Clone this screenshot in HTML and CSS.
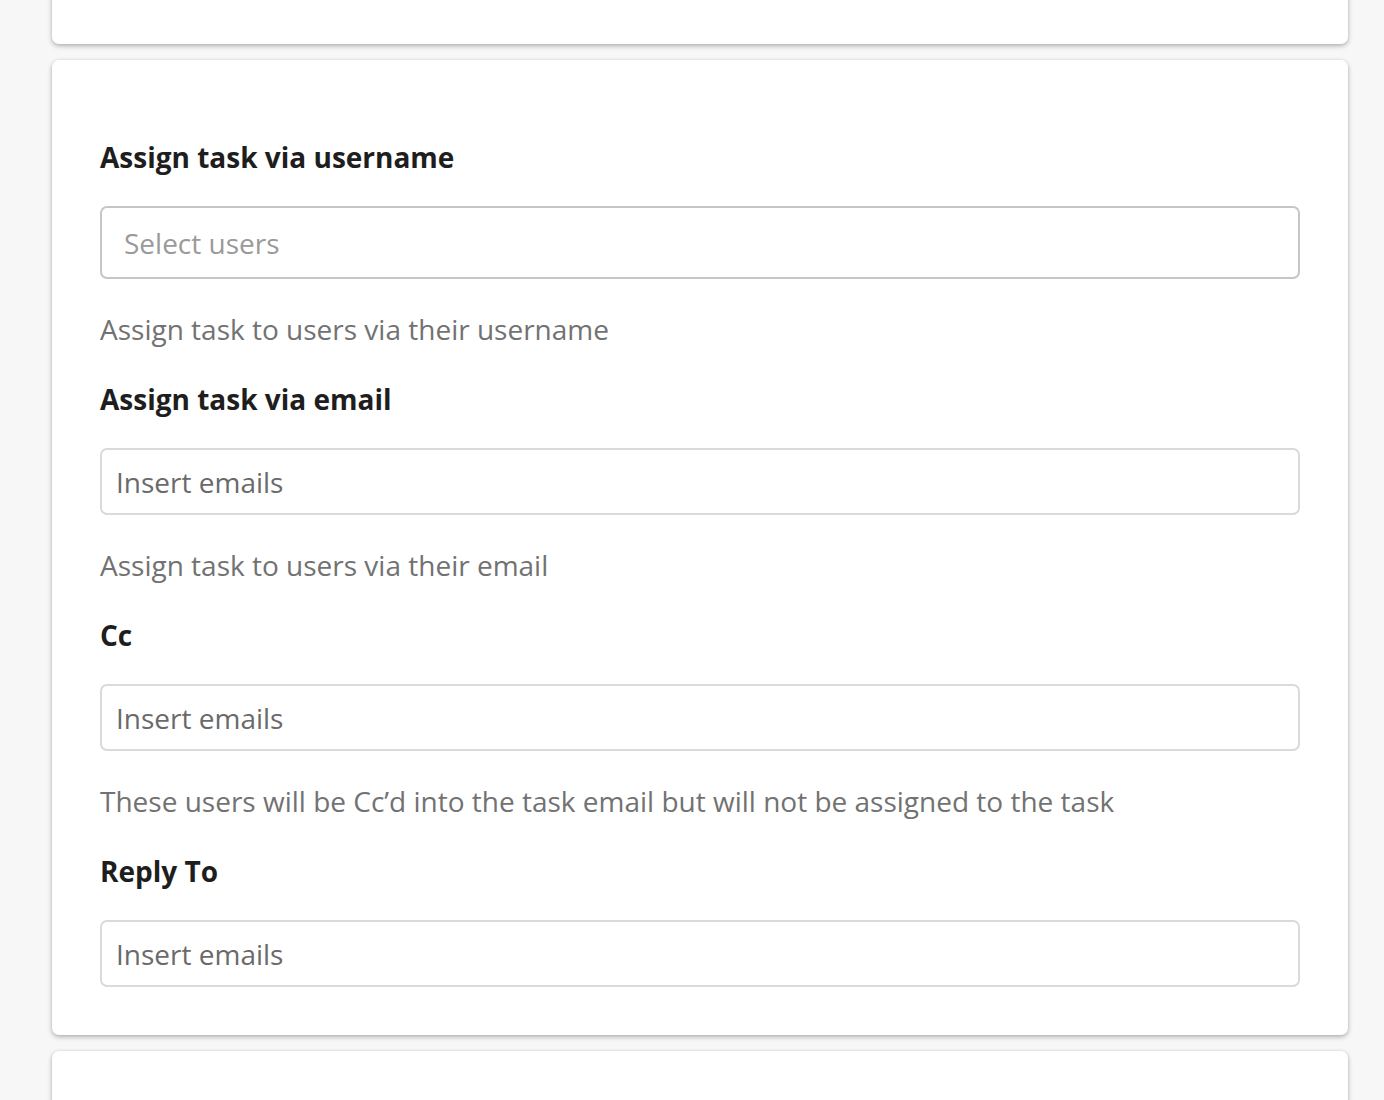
FILE: index.html
```html
<!DOCTYPE html>
<html lang="en">
<head>
<meta charset="utf-8">
<title>Assign task</title>
<link rel="stylesheet" href="styles.css">
</head>
<body>
<main class="page">
  <section class="card card-prev"></section>
  <section class="card card-main">
    <div class="field">
      <label class="label">Assign task via username</label>
      <div class="select">Select users</div>
      <p class="help">Assign task to users via their username</p>
    </div>
    <div class="field">
      <label class="label">Assign task via email</label>
      <div class="input">Insert emails</div>
      <p class="help">Assign task to users via their email</p>
    </div>
    <div class="field">
      <label class="label">Cc</label>
      <div class="input">Insert emails</div>
      <p class="help">These users will be Cc’d into the task email but will not be assigned to the task</p>
    </div>
    <div class="field">
      <label class="label">Reply To</label>
      <div class="input">Insert emails</div>
    </div>
  </section>
  <section class="card card-next"></section>
</main>
</body>
</html>
```

FILE: styles.css
```css
* { box-sizing: border-box; }
html, body { margin: 0; padding: 0; }
body {
  background: #f7f7f7;
  font-family: "Open Sans", "Noto Sans", sans-serif;
  overflow: hidden;
  height: 1100px;
}
.page {
  display: flex;
  flex-direction: column;
  gap: 16px;
  padding: 0 36px 0 52px;
  width: 1384px;
}
.card {
  background: #fff;
  border-radius: 7px;
  box-shadow: 0 2px 5px rgba(0,0,0,0.28), 0 0 3px rgba(0,0,0,0.07);
  width: 1296px;
}
.card-prev {
  height: 104px;
  margin-top: -60px;
}
.card-main {
  padding: 77px 48px 48px 48px;
}
.card-next {
  height: 200px;
}
.field { display: flex; flex-direction: column; }
.field + .field { margin-top: 30px; }
.label {
  display: block;
  font-weight: 700;
  font-size: 28px;
  line-height: 40px;
  color: #1e1e1e;
  margin-bottom: 29px;
}
.select {
  height: 73px;
  border: 2px solid #c6c6c6;
  border-radius: 7px;
  padding: 0 22px;
  display: flex;
  align-items: center;
  font-size: 28px;
  color: #9a9a9a;
}
.input {
  height: 67px;
  border: 2px solid #dadada;
  border-radius: 7px;
  padding: 0 14px;
  display: flex;
  align-items: center;
  font-size: 28px;
  color: #6a6a6a;
}
.help {
  margin: 30px 0 0 0;
  font-size: 28px;
  line-height: 40px;
  color: #727272;
}
```
